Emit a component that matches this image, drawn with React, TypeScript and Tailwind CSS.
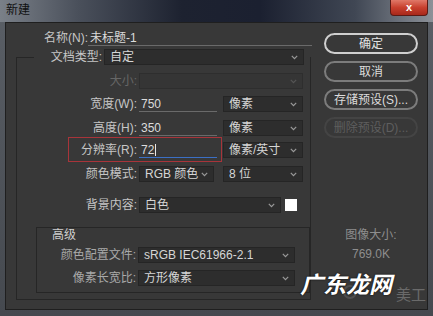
import React from "react";

const FONT = { fontFamily: '"Liberation Sans", "Noto Sans CJK SC", sans-serif' };

function Chevron({ dim }: { dim?: boolean }) {
  return (
    <svg width="7" height="5" viewBox="0 0 7 5" className="shrink-0">
      <path d="M0.8 0.8 L3.5 3.6 L6.2 0.8" fill="none" stroke={dim ? "#555" : "#9a9a9a"} strokeWidth="1.2" />
    </svg>
  );
}

function Dropdown({ text, w, disabled }: { text?: string; w: string; disabled?: boolean }) {
  return (
    <div
      className={`${w} h-[16px] flex items-center justify-between pl-[5px] pr-[5px] border ${
        disabled ? "bg-[#353535] border-[#2e2e2e]" : "bg-[#2d2d2d] border-[#252525]"
      } text-[12px] leading-none text-[#d6d6d6]`}
    >
      <span className="whitespace-nowrap">{text}</span>
      <Chevron dim={disabled} />
    </div>
  );
}

function Input({ text, w, focus }: { text: string; w: string; focus?: boolean }) {
  return (
    <div
      className={`${w} h-[16px] flex items-center pl-[2px] border-b ${
        focus ? "border-[#3b6fc4]" : "border-[#6a6a6a]"
      } text-[12px] leading-none text-[#dcdcdc]`}
    >
      <span>{text}</span>
      {focus && <span className="w-px h-[12px] bg-[#e8e8e8] ml-[1px]" />}
    </div>
  );
}

function Label({ text, w, dim, muted }: { text: string; w: string; dim?: boolean; muted?: boolean }) {
  return (
    <div
      className={`${w} shrink-0 text-right text-[12px] leading-none whitespace-nowrap ${
        dim ? "text-[#666]" : muted ? "text-[#a9a9a9]" : "text-[#c6c6c6]"
      }`}
    >
      {text}
    </div>
  );
}

function Button({ text, focus, disabled }: { text: string; focus?: boolean; disabled?: boolean }) {
  return (
    <div
      className={`h-[21px] w-[94px] rounded-full flex items-center justify-center text-[12px] leading-none ${
        focus
          ? "border-2 border-[#cfcfcf] text-[#e2e2e2]"
          : disabled
          ? "border-2 border-[#444] text-[#5e5e5e]"
          : "border-2 border-[#7c7c7c] text-[#dcdcdc]"
      }`}
    >
      {text}
    </div>
  );
}

export default function App() {
  return (
    <div
      className="w-[433px] h-[316px] flex flex-col overflow-hidden relative bg-[linear-gradient(to_bottom,#5a5f66,#45494f)]"
      style={FONT}
    >
      {/* title bar */}
      <div className="h-[22px] shrink-0 flex items-start justify-between bg-[linear-gradient(to_right,#7a8088_0%,#4a505b_18%,#1d2230_42%,#1b2030_60%,#404754_82%,#8c9198_100%)]">
        <div className="pl-[6px] pt-[4px] text-[12px] leading-none text-[#111]">新建</div>
        <div className="mr-[5px] w-[38px] h-[16px] rounded-b-[4px] border border-[#5b1a14] border-t-0 bg-[linear-gradient(to_bottom,#e07868,#c8402e_50%,#a8281a)] flex items-center justify-center">
          <span className="text-white text-[11px] font-bold leading-none">x</span>
        </div>
      </div>

      {/* body */}
      <div className="mx-[5px] h-[288px] shrink-0 bg-[#383838] border border-[#1f1f1f] flex">
        {/* left column */}
        <div className="w-[312px] shrink-0 flex flex-col">
          {/* name */}
          <div className="mt-[7px] flex items-center h-[16px]">
            <Label text="名称(N):" w="w-[82px]" />
            <Input text="未标题-1" w="w-[224px]" />
          </div>
          {/* preset */}
          <div className="mt-[3px] flex items-center h-[16px]">
            <Label text="文档类型:" w="w-[96px]" />
            <div className="ml-[2px]">
              <Dropdown text="自定" w="w-[200px]" />
            </div>
          </div>

          {/* group box */}
          <div className="relative mt-[-8px] ml-[10px] w-[295px] h-[243px] border-l border-r border-b border-[#262626] flex flex-col">
            <div className="absolute left-0 top-0 w-[17px] h-px bg-[#262626]" />
            {/* size */}
            <div className="mt-[16px] flex items-center h-[16px]">
              <Label text="大小:" w="w-[120px]" dim />
              <div className="ml-[2px]">
                <Dropdown w="w-[164px]" disabled />
              </div>
            </div>
            {/* width */}
            <div className="mt-[7px] flex items-center h-[16px]">
              <Label text="宽度(W):" w="w-[120px]" />
              <div className="ml-[2px]">
                <Input text="750" w="w-[78px]" />
              </div>
              <div className="ml-[6px]">
                <Dropdown text="像素" w="w-[80px]" />
              </div>
            </div>
            {/* height */}
            <div className="mt-[8px] flex items-center h-[16px]">
              <Label text="高度(H):" w="w-[120px]" />
              <div className="ml-[2px]">
                <Input text="350" w="w-[78px]" />
              </div>
              <div className="ml-[6px]">
                <Dropdown text="像素" w="w-[80px]" />
              </div>
            </div>
            {/* resolution */}
            <div className="relative mt-[6px] flex items-center h-[16px]">
              <div className="absolute left-[51px] top-[-5px] w-[154px] h-[25px] border border-[#a8343a]" />
              <Label text="分辨率(R):" w="w-[120px]" />
              <div className="ml-[2px]">
                <Input text="72" w="w-[78px]" focus />
              </div>
              <div className="ml-[6px]">
                <Dropdown text="像素/英寸" w="w-[80px]" />
              </div>
            </div>
            {/* color mode */}
            <div className="mt-[8px] flex items-center h-[16px]">
              <Label text="颜色模式:" w="w-[120px]" />
              <div className="ml-[2px]">
                <Dropdown text="RGB 颜色" w="w-[75px]" />
              </div>
              <div className="ml-[9px]">
                <Dropdown text="8 位" w="w-[80px]" />
              </div>
            </div>
            {/* background */}
            <div className="mt-[15px] flex items-center h-[16px]">
              <Label text="背景内容:" w="w-[120px]" />
              <div className="ml-[2px]">
                <Dropdown text="白色" w="w-[142px]" />
              </div>
              <div className="ml-[4px] w-[12px] h-[12px] bg-white" />
            </div>

            {/* advanced box */}
            <div className="mt-[14px] ml-[19px] w-[274px] h-[66px] border border-[#262626] flex flex-col">
              <div className="mt-[1px] ml-[15px] text-[12px] leading-none text-[#cfcfcf]">高级</div>
              <div className="mt-[6px] flex items-center h-[16px]">
                <Label text="颜色配置文件:" w="w-[99px]" muted />
                <div className="ml-[2px]">
                  <Dropdown text="sRGB IEC61966-2.1" w="w-[157px]" />
                </div>
              </div>
              <div className="mt-[7px] flex items-center h-[16px]">
                <Label text="像素长宽比:" w="w-[99px]" muted />
                <div className="ml-[2px]">
                  <Dropdown text="方形像素" w="w-[157px]" />
                </div>
              </div>
            </div>
          </div>
        </div>

        {/* right column */}
        <div className="ml-[6px] w-[94px] flex flex-col items-center">
          <div className="mt-[10px]"><Button text="确定" focus /></div>
          <div className="mt-[7px]"><Button text="取消" /></div>
          <div className="mt-[7px]"><Button text="存储预设(S)..." /></div>
          <div className="mt-[7px]"><Button text="删除预设(D)..." disabled /></div>
          <div className="mt-[90px] text-[12px] leading-[14px] text-[#8e8e8e]">图像大小:</div>
          <div className="mt-[5px] text-[12px] leading-[14px] text-[#8e8e8e]">769.0K</div>
        </div>
      </div>

      {/* watermark */}
      <div className="absolute left-[343px] top-[285px] w-[14px] h-[14px] rounded-full border-2 border-[#5a5a5a] opacity-70" />
      <div className="absolute left-[396px] top-[287px] text-[15px] leading-none text-[#6a6a6a]">美工</div>
      <div
        className="absolute left-[300px] top-[274px] text-[23px] leading-none font-bold italic text-white"
        style={{ textShadow: "0 0 2px #000" }}
      >
        广东龙网
      </div>
    </div>
  );
}
